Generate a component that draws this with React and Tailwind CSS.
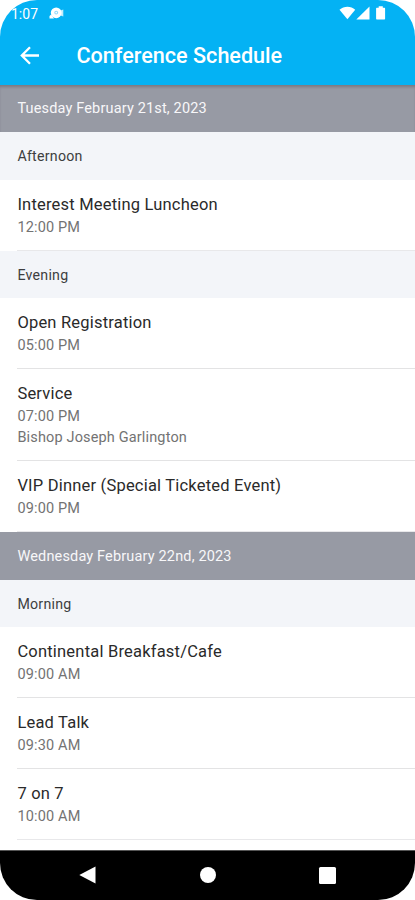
const schedule = [
  {
    day: 'Tuesday February 21st, 2023',
    height: 'h-[47px]',
    sections: [
      {
        name: 'Afternoon',
        height: 'h-[48px]',
        events: [{ title: 'Interest Meeting Luncheon', time: '12:00 PM' }],
      },
      {
        name: 'Evening',
        height: 'h-[47px]',
        events: [
          { title: 'Open Registration', time: '05:00 PM' },
          { title: 'Service', time: '07:00 PM', speaker: 'Bishop Joseph Garlington' },
          { title: 'VIP Dinner (Special Ticketed Event)', time: '09:00 PM' },
        ],
      },
    ],
  },
  {
    day: 'Wednesday February 22nd, 2023',
    height: 'h-[48px]',
    sections: [
      {
        name: 'Morning',
        height: 'h-[47px]',
        events: [
          { title: 'Continental Breakfast/Cafe', time: '09:00 AM' },
          { title: 'Lead Talk', time: '09:30 AM' },
          { title: '7 on 7', time: '10:00 AM' },
        ],
      },
    ],
  },
];

function StatusBar() {
  return (
    <div className="flex h-[26px] items-center pl-[11px] pr-[28px] text-white">
      <span className="pt-[2px] text-[14px] leading-none">1:07</span>
      <svg className="ml-[11px]" width="16" height="14" viewBox="0 0 16 14" fill="currentColor">
        <path d="M.5 12.500V10L2.200 8.500 5 12.500Z" />
        <circle cx="7.200" cy="6.800" r="5.400" />
        <path d="M11.500 4.500 14.300 3.500v7l-2.800-1Z" opacity=".75" />
        <circle cx="7.200" cy="6.600" r="1.900" fill="#8fd8fb" />
        <circle cx="7.200" cy="6.600" r=".9" />
      </svg>
      <svg className="ml-auto" width="48" height="15" viewBox="0 0 48 15" fill="currentColor">
        <path d="M0.5 3.700C5 -.2 12 -.2 16.200 3.700L8.400 13.300Z" />
        <path d="M30.500 .5V13.400H17.300Z" />
        <path d="M39.700 .2h4.100v1.600h1.600q.7 0 .7.7v10.300q0 .7-.7.7h-7.600q-.7 0-.7-.7V2.500q0-.7.7-.7h1.900Z" />
      </svg>
    </div>
  );
}

function AppBar() {
  return (
    <header className="h-[85px] shrink-0 bg-[#04b2f4]">
      <StatusBar />
      <div className="flex h-[59px] items-center pl-[20px] text-white">
        <svg width="19" height="19" viewBox="0 0 19 19" fill="none" stroke="currentColor" strokeWidth="2.300">
          <path d="M19 9.500H2M10 1.300 1.800 9.500 10 17.700" />
        </svg>
        <h1 className="ml-[37.500px] text-[21.600px] font-medium leading-none">Conference Schedule</h1>
      </div>
    </header>
  );
}

function EventRow({ event, last }) {
  return (
    <li className="pl-[17px]">
      <div
        className={`border-b pt-[13px] pl-[0.4px] ${last ? 'border-[#e8e8ea]' : 'border-[#e3e3e4]'} ${
          event.speaker ? 'h-[92px]' : 'h-[71px]'
        }`}
      >
        <div className="text-[16.500px] leading-[24px] tracking-[0.200px] text-[#2a2a2a]">{event.title}</div>
        <div className="text-[14.500px] leading-[22px] tracking-[0.160px] text-[#737373]">{event.time}</div>
        {event.speaker && (
          <div className="text-[14.500px] leading-[20px] tracking-[0.150px] text-[#737373]">{event.speaker}</div>
        )}
      </div>
    </li>
  );
}

function NavigationBar() {
  return (
    <nav className="flex h-[50px] shrink-0 items-center border-t border-[#555] bg-black pb-px pl-[79px] text-white">
      <svg width="17" height="18" viewBox="0 0 17 18" fill="currentColor">
        <path d="M.3 9 16.500 .5V17.500Z" />
      </svg>
      <div className="ml-[104px] size-[16px] rounded-full bg-white" />
      <div className="ml-[103px] size-[17px] rounded-[1.500px] bg-white" />
    </nav>
  );
}

export default function App() {
  return (
    <div className="h-[900px] w-[415px] bg-white font-['Roboto',sans-serif]">
      <div className="flex h-full flex-col overflow-hidden rounded-[37px] bg-white">
        <AppBar />
        <main className="min-h-0 flex-1 overflow-hidden">
          {schedule.map((day, i) => (
            <section key={day.day}>
              <h2
                className={`flex items-center bg-[#979aa4] pl-[17.400px] pt-px text-[14.500px] tracking-[0.160px] text-[#f7f7f9] ${day.height} ${
                  i === 0 ? 'shadow-[inset_0_3px_3px_-1px_rgba(80,70,80,0.4)]' : ''
                }`}
              >
                {day.day}
              </h2>
              {day.sections.map((part) => (
                <div key={part.name}>
                  <h3 className={`flex items-center bg-[#f3f5f9] pl-[17.400px] pt-[2px] text-[14.200px] tracking-[0.250px] text-[#3d3e40] ${part.height}`}>
                    {part.name}
                  </h3>
                  <ul>
                    {part.events.map((event, n) => (
                      <EventRow key={event.title} event={event} last={n === part.events.length - 1} />
                    ))}
                  </ul>
                </div>
              ))}
            </section>
          ))}
        </main>
        <NavigationBar />
      </div>
    </div>
  );
}
